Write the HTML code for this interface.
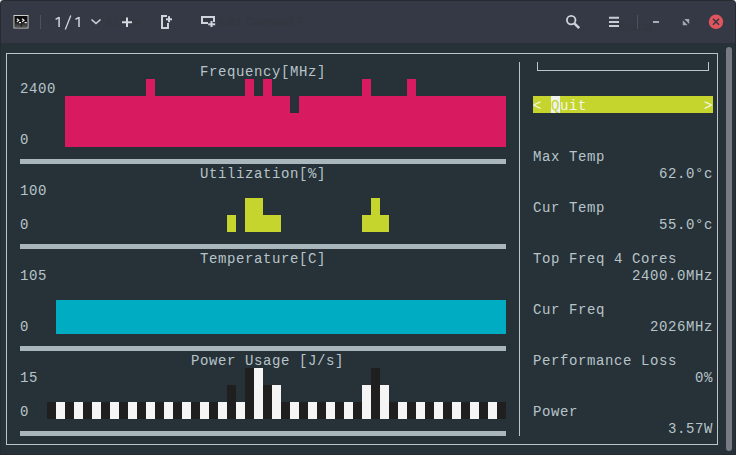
<!DOCTYPE html>
<html><head><meta charset="utf-8"><style>
html,body{margin:0;padding:0;}
body{width:736px;height:455px;overflow:hidden;position:relative;background:#262a31;font-family:"Liberation Mono",monospace;}
#hdr{position:absolute;left:1px;top:1px;width:734px;height:42px;border-radius:3px 3px 0 0;background:#353945;}
#term{position:absolute;left:1px;top:43px;width:734px;height:411px;background:#263238;}
#g i{position:absolute;display:block;}
#g b{position:absolute;font-weight:normal;font-size:14px;line-height:17px;height:17px;white-space:pre;letter-spacing:0.6px;}
.ic{position:absolute;}
#sb{position:absolute;left:726px;top:47px;width:6px;height:404px;border-radius:3px;background:#767b84;}
.hd{position:absolute;font-family:"Liberation Sans",sans-serif;}
</style></head><body>
<div id="corner1" style="position:absolute;left:0;top:0;width:4px;height:4px;background:#e8e8ea"></div><div id="corner2" style="position:absolute;right:0;top:0;width:4px;height:4px;background:#e8e8ea"></div><div id="edge" style="position:absolute;left:0;top:0;width:736px;height:455px;border-radius:4px 4px 0 0;background:#262a31"></div><div id="hdr"></div>
<div id="term"></div><div style="position:absolute;left:1px;top:43px;width:734px;height:1px;background:#2b2f38"></div>
<div id="sb"></div>
<div id="g">
<i style="left:6px;top:53px;width:712px;height:1px;background:#b9c5ca;"></i>
<i style="left:6px;top:444px;width:712px;height:1px;background:#b9c5ca;"></i>
<i style="left:6px;top:53px;width:1px;height:392px;background:#b9c5ca;"></i>
<i style="left:717px;top:53px;width:1px;height:392px;background:#b9c5ca;"></i>
<i style="left:519px;top:62px;width:1px;height:374px;background:#b9c5ca;"></i>
<i style="left:537px;top:62px;width:1px;height:9px;background:#b9c5ca;"></i>
<i style="left:708px;top:62px;width:1px;height:9px;background:#b9c5ca;"></i>
<i style="left:537px;top:70px;width:172px;height:1px;background:#b9c5ca;"></i>
<i style="left:65px;top:96px;width:441px;height:51px;background:#d81b60;"></i>
<i style="left:146px;top:79px;width:9px;height:17px;background:#d81b60;"></i>
<i style="left:245px;top:79px;width:9px;height:17px;background:#d81b60;"></i>
<i style="left:263px;top:79px;width:9px;height:17px;background:#d81b60;"></i>
<i style="left:362px;top:79px;width:9px;height:17px;background:#d81b60;"></i>
<i style="left:407px;top:79px;width:9px;height:17px;background:#d81b60;"></i>
<i style="left:290px;top:96px;width:9px;height:17px;background:#263238;"></i>
<b style="left:200px;top:64px;color:#b8c4c9;">Frequency[MHz]</b>
<b style="left:20px;top:81px;color:#b8c4c9;">2400</b>
<b style="left:20px;top:132px;color:#b8c4c9;">0</b>
<i style="left:20px;top:159px;width:486px;height:5px;background:#a9b6bc;"></i>
<i style="left:20px;top:244px;width:486px;height:5px;background:#a9b6bc;"></i>
<i style="left:20px;top:346px;width:486px;height:5px;background:#a9b6bc;"></i>
<i style="left:20px;top:431px;width:486px;height:5px;background:#a9b6bc;"></i>
<b style="left:200px;top:166px;color:#b8c4c9;">Utilization[%]</b>
<b style="left:20px;top:183px;color:#b8c4c9;">100</b>
<b style="left:20px;top:217px;color:#b8c4c9;">0</b>
<i style="left:227px;top:215px;width:9px;height:17px;background:#c6d52e;"></i>
<i style="left:245px;top:198px;width:18px;height:34px;background:#c6d52e;"></i>
<i style="left:263px;top:215px;width:18px;height:17px;background:#c6d52e;"></i>
<i style="left:362px;top:215px;width:27px;height:17px;background:#c6d52e;"></i>
<i style="left:371px;top:198px;width:9px;height:17px;background:#c6d52e;"></i>
<b style="left:200px;top:251px;color:#b8c4c9;">Temperature[C]</b>
<b style="left:20px;top:268px;color:#b8c4c9;">105</b>
<b style="left:20px;top:319px;color:#b8c4c9;">0</b>
<i style="left:56px;top:300px;width:450px;height:34px;background:#00acc1;"></i>
<b style="left:191px;top:353px;color:#b8c4c9;">Power Usage [J/s]</b>
<b style="left:20px;top:370px;color:#b8c4c9;">15</b>
<b style="left:20px;top:404px;color:#b8c4c9;">0</b>
<i style="left:47px;top:402px;width:9px;height:17px;background:#1f1f1f;"></i>
<i style="left:56px;top:402px;width:9px;height:17px;background:#f5f5f5;"></i>
<i style="left:65px;top:402px;width:9px;height:17px;background:#1f1f1f;"></i>
<i style="left:74px;top:402px;width:9px;height:17px;background:#f5f5f5;"></i>
<i style="left:83px;top:402px;width:9px;height:17px;background:#1f1f1f;"></i>
<i style="left:92px;top:402px;width:9px;height:17px;background:#f5f5f5;"></i>
<i style="left:101px;top:402px;width:9px;height:17px;background:#1f1f1f;"></i>
<i style="left:110px;top:402px;width:9px;height:17px;background:#f5f5f5;"></i>
<i style="left:119px;top:402px;width:9px;height:17px;background:#1f1f1f;"></i>
<i style="left:128px;top:402px;width:9px;height:17px;background:#f5f5f5;"></i>
<i style="left:137px;top:402px;width:9px;height:17px;background:#1f1f1f;"></i>
<i style="left:146px;top:402px;width:9px;height:17px;background:#f5f5f5;"></i>
<i style="left:155px;top:402px;width:9px;height:17px;background:#1f1f1f;"></i>
<i style="left:164px;top:402px;width:9px;height:17px;background:#f5f5f5;"></i>
<i style="left:173px;top:402px;width:9px;height:17px;background:#1f1f1f;"></i>
<i style="left:182px;top:402px;width:9px;height:17px;background:#f5f5f5;"></i>
<i style="left:191px;top:402px;width:9px;height:17px;background:#1f1f1f;"></i>
<i style="left:200px;top:402px;width:9px;height:17px;background:#f5f5f5;"></i>
<i style="left:209px;top:402px;width:9px;height:17px;background:#1f1f1f;"></i>
<i style="left:218px;top:402px;width:9px;height:17px;background:#f5f5f5;"></i>
<i style="left:227px;top:385px;width:9px;height:34px;background:#1f1f1f;"></i>
<i style="left:236px;top:402px;width:9px;height:17px;background:#f5f5f5;"></i>
<i style="left:245px;top:368px;width:9px;height:51px;background:#1f1f1f;"></i>
<i style="left:254px;top:368px;width:9px;height:51px;background:#f5f5f5;"></i>
<i style="left:263px;top:385px;width:9px;height:34px;background:#1f1f1f;"></i>
<i style="left:272px;top:385px;width:9px;height:34px;background:#f5f5f5;"></i>
<i style="left:281px;top:402px;width:9px;height:17px;background:#1f1f1f;"></i>
<i style="left:290px;top:402px;width:9px;height:17px;background:#f5f5f5;"></i>
<i style="left:299px;top:402px;width:9px;height:17px;background:#1f1f1f;"></i>
<i style="left:308px;top:402px;width:9px;height:17px;background:#f5f5f5;"></i>
<i style="left:317px;top:402px;width:9px;height:17px;background:#1f1f1f;"></i>
<i style="left:326px;top:402px;width:9px;height:17px;background:#f5f5f5;"></i>
<i style="left:335px;top:402px;width:9px;height:17px;background:#1f1f1f;"></i>
<i style="left:344px;top:402px;width:9px;height:17px;background:#f5f5f5;"></i>
<i style="left:353px;top:402px;width:9px;height:17px;background:#1f1f1f;"></i>
<i style="left:362px;top:385px;width:9px;height:34px;background:#f5f5f5;"></i>
<i style="left:371px;top:368px;width:9px;height:51px;background:#1f1f1f;"></i>
<i style="left:380px;top:385px;width:9px;height:34px;background:#f5f5f5;"></i>
<i style="left:389px;top:402px;width:9px;height:17px;background:#1f1f1f;"></i>
<i style="left:398px;top:402px;width:9px;height:17px;background:#f5f5f5;"></i>
<i style="left:407px;top:402px;width:9px;height:17px;background:#1f1f1f;"></i>
<i style="left:416px;top:402px;width:9px;height:17px;background:#f5f5f5;"></i>
<i style="left:425px;top:402px;width:9px;height:17px;background:#1f1f1f;"></i>
<i style="left:434px;top:402px;width:9px;height:17px;background:#f5f5f5;"></i>
<i style="left:443px;top:402px;width:9px;height:17px;background:#1f1f1f;"></i>
<i style="left:452px;top:402px;width:9px;height:17px;background:#f5f5f5;"></i>
<i style="left:461px;top:402px;width:9px;height:17px;background:#1f1f1f;"></i>
<i style="left:470px;top:402px;width:9px;height:17px;background:#f5f5f5;"></i>
<i style="left:479px;top:402px;width:9px;height:17px;background:#1f1f1f;"></i>
<i style="left:488px;top:402px;width:9px;height:17px;background:#f5f5f5;"></i>
<i style="left:497px;top:402px;width:9px;height:17px;background:#1f1f1f;"></i>
<i style="left:533px;top:96px;width:180px;height:17px;background:#c6d52e;"></i>
<i style="left:551px;top:96px;width:9px;height:17px;background:#eef2ec;"></i>
<b style="left:533px;top:98px;color:#f3f7e6;">&lt;</b>
<b style="left:551px;top:98px;color:#c6d52e;">Q</b>
<b style="left:560px;top:98px;color:#f3f7e6;">uit</b>
<b style="left:704px;top:98px;color:#f3f7e6;">&gt;</b>
<b style="left:533px;top:149px;color:#b8c4c9;">Max Temp</b>
<b style="left:659px;top:166px;color:#b8c4c9;">62.0&deg;c</b>
<b style="left:533px;top:200px;color:#b8c4c9;">Cur Temp</b>
<b style="left:659px;top:217px;color:#b8c4c9;">55.0&deg;c</b>
<b style="left:533px;top:251px;color:#b8c4c9;">Top Freq 4 Cores</b>
<b style="left:632px;top:268px;color:#b8c4c9;">2400.0MHz</b>
<b style="left:533px;top:302px;color:#b8c4c9;">Cur Freq</b>
<b style="left:650px;top:319px;color:#b8c4c9;">2026MHz</b>
<b style="left:533px;top:353px;color:#b8c4c9;">Performance Loss</b>
<b style="left:695px;top:370px;color:#b8c4c9;">0%</b>
<b style="left:533px;top:404px;color:#b8c4c9;">Power</b>
<b style="left:668px;top:421px;color:#b8c4c9;">3.57W</b>
</div>
<!-- header icons -->
<svg class="ic" style="left:0;top:0" width="736" height="43" viewBox="0 0 736 43" shape-rendering="geometricPrecision">
  <!-- ghost texts -->
  <text x="216" y="25.5" font-family="Liberation Sans" font-weight="bold" font-size="13" fill="#33373f">Add Contact F</text>
  <text x="104" y="25.5" font-family="Liberation Sans" font-weight="bold" font-size="13" fill="#33373f">AI For</text>
  <text x="614" y="31" font-family="Liberation Sans" font-weight="bold" font-size="13" fill="#33373f">Visual</text>
  <!-- terminal icon -->
  <rect x="14" y="15.5" width="14" height="12.5" fill="#0d0d0d" stroke="#d8d8d0" stroke-width="0.95"/>
  <defs><linearGradient id="tg" x1="0" y1="0" x2="0" y2="1"><stop offset="0" stop-color="#1a1a1a"/><stop offset="1" stop-color="#5a5a5a"/></linearGradient></defs>
  <rect x="15" y="22" width="5.8" height="5.2" fill="url(#tg)"/>
  <rect x="21.6" y="22" width="5.6" height="5.2" fill="url(#tg)"/>
  <path d="M16.8 18.8 L18.9 20.3 L16.8 21.8 M22 18.8 L24.1 20.3 L22 21.8" stroke="#f0f0f0" stroke-width="1.1" fill="none"/>
  <rect x="19" y="22" width="2" height="1.2" fill="#f0f0f0"/>
  <rect x="24.6" y="22" width="2.2" height="1.2" fill="#f0f0f0"/>
  <rect x="40" y="15" width="1" height="14" fill="#4c5160"/>
  <rect x="637" y="15" width="1" height="14" fill="#4c5160"/>
  <!-- 1/1 -->
  <path d="M59.1 17 V27 M55.6 19.3 L59.1 17.3" stroke="#cfd4dc" stroke-width="1.5" fill="none"/>
  <path d="M65.3 29.6 L70.8 15.6" stroke="#cfd4dc" stroke-width="1.3" fill="none"/>
  <path d="M79 17 V27 M75.5 19.3 L79 17.3" stroke="#cfd4dc" stroke-width="1.5" fill="none"/>
  <!-- chevron -->
  <path d="M91.5 19.5 L96 23.5 L100.5 19.5" stroke="#cfd3da" stroke-width="1.6" fill="none"/>
  <!-- plus -->
  <path d="M122 22.3 H132 M127 17.5 V27" stroke="#d3d7de" stroke-width="2" fill="none"/>
  <!-- split icon 1 -->
  <g fill="#cfd3da">
  <rect x="161" y="15" width="2" height="14"/>
  <rect x="161" y="15" width="6" height="2"/>
  <rect x="161" y="27" width="8" height="2"/>
  <rect x="167" y="23" width="2" height="6"/>
  <rect x="166" y="18.3" width="6" height="2"/>
  <rect x="168" y="16.2" width="2" height="6"/>
  <!-- split icon 2 -->
  <rect x="201" y="16" width="14" height="2"/>
  <rect x="201" y="16" width="2" height="8"/>
  <rect x="201" y="22" width="7" height="2"/>
  <rect x="213" y="16" width="2" height="6"/>
  <rect x="208.2" y="23.3" width="7" height="2"/>
  <rect x="210.5" y="21" width="2" height="6"/>
  </g>
  <!-- search -->
  <circle cx="571.2" cy="20.1" r="4.3" stroke="#cfd3da" stroke-width="1.8" fill="none"/>
  <path d="M574.6 23.6 L579.2 28.2" stroke="#cfd3da" stroke-width="2.6" fill="none"/>
  <!-- hamburger -->
  <path d="M609 17.7 H619 M609 21.9 H619 M609 26.1 H619" stroke="#c8ccd4" stroke-width="2" fill="none"/>
  <!-- minimize -->
  <rect x="653" y="21" width="6" height="2" fill="#a9adb6"/>
  <!-- maximize -->
  <path d="M684.3 19 H689.2 V23.9 Z" fill="#a4a8b1"/>
  <path d="M682.8 20.3 V25.2 H687.7 Z" fill="#a4a8b1"/>
  <!-- close -->
  <circle cx="716" cy="21.8" r="7.2" fill="#e0555d"/>
  <path d="M713 18.8 L719 24.8 M719 18.8 L713 24.8" stroke="#353945" stroke-width="1.6" fill="none"/>
</svg>
</body></html>
